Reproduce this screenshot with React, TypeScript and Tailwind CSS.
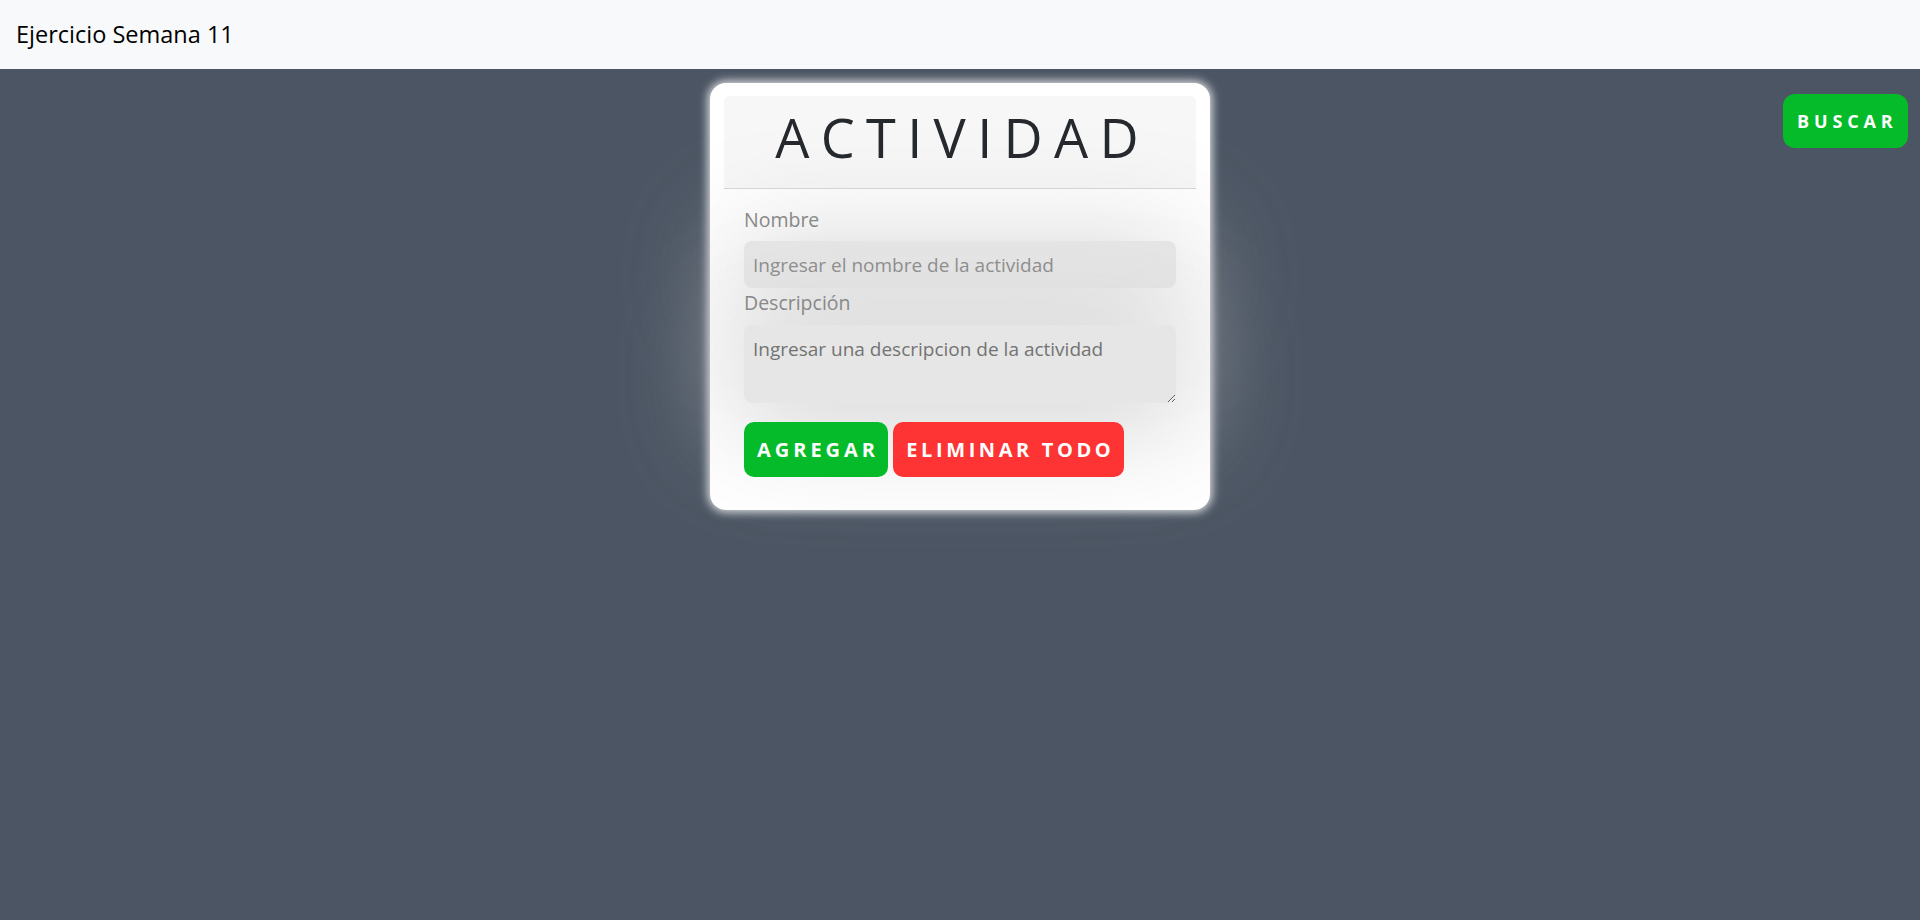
import React, { useState } from "react";

export default function App() {
  const [nombre, setNombre] = useState("");
  const [descripcion, setDescripcion] = useState("");

  return (
    <div className="min-h-screen flex flex-col bg-[#4b5563] font-['Open_Sans',sans-serif]">
      {/* navbar */}
      <nav className="h-[69px] shrink-0 flex items-center px-4 bg-[#f8f9fa]">
        <span className="text-[23.5px] text-black">Ejercicio Semana 11</span>
      </nav>

      <main className="flex-1 grid grid-cols-[1fr_auto_1fr] items-start">
        <div />

        <div className="mt-[14px] w-[500px] rounded-[16px] bg-white px-[14px] py-[13px] shadow-[0_0_10px_2px_rgba(255,255,255,0.85)]">
          <div className="h-[93px] pt-[9px] rounded-t-[6px] bg-[#f7f7f7] border-b border-[#d6d6d6] text-center">
            <h1 className="text-[54px] font-medium leading-[1.2] tracking-[0.21em] pl-[0.1em] text-[#25282c]">
              ACTIVIDAD
            </h1>
          </div>

          <form
            className="px-5 pt-4 pb-5"
            onSubmit={(e) => e.preventDefault()}
          >
            <label
              htmlFor="nombre"
              className="block text-[19.5px] leading-[30px] mb-[6px] text-[#888888]"
            >
              Nombre
            </label>
            <input
              id="nombre"
              type="text"
              value={nombre}
              onChange={(e) => setNombre(e.target.value)}
              placeholder="Ingresar el nombre de la actividad"
              className="block w-full h-[47px] px-[9px] rounded-[8px] bg-[#e6e6e6] text-[19px] text-[#555] placeholder:text-[#8e8e8e] outline-none shadow-[0_12px_110px_12px_rgba(205,205,205,0.85)]"
            />

            <label
              htmlFor="descripcion"
              className="block text-[19.5px] leading-[30px] mb-[7px] text-[#888888]"
            >
              Descripción
            </label>
            <textarea
              id="descripcion"
              value={descripcion}
              onChange={(e) => setDescripcion(e.target.value)}
              placeholder="Ingresar una descripcion de la actividad"
              className="block w-full h-[78px] px-[9px] pt-[9px] rounded-[8px] bg-[#e6e6e6] text-[19px] leading-[30px] text-[#555] placeholder:text-[#737373] outline-none shadow-[0_12px_110px_12px_rgba(205,205,205,0.85)]"
            />

            <div className="mt-[19px] flex gap-[5px]">
              <button
                type="submit"
                className="w-[144px] h-[55px] rounded-[10px] bg-[#05bb2a] text-white text-[20px] font-bold tracking-[0.2em] pl-[0.2em]"
              >
                AGREGAR
              </button>
              <button
                type="button"
                onClick={() => {
                  setNombre("");
                  setDescripcion("");
                }}
                className="w-[231px] h-[55px] rounded-[10px] bg-[#fd3334] text-white text-[20px] font-bold tracking-[0.18em] pl-[0.18em]"
              >
                ELIMINAR TODO
              </button>
            </div>
          </form>
        </div>

        <div className="flex justify-end pr-3 pt-[25px]">
          <button className="w-[125px] h-[54px] rounded-[12px] bg-[#05bb2a] text-white text-[18px] font-bold tracking-[0.27em] pl-[0.2em]">
            BUSCAR
          </button>
        </div>
      </main>
    </div>
  );
}
